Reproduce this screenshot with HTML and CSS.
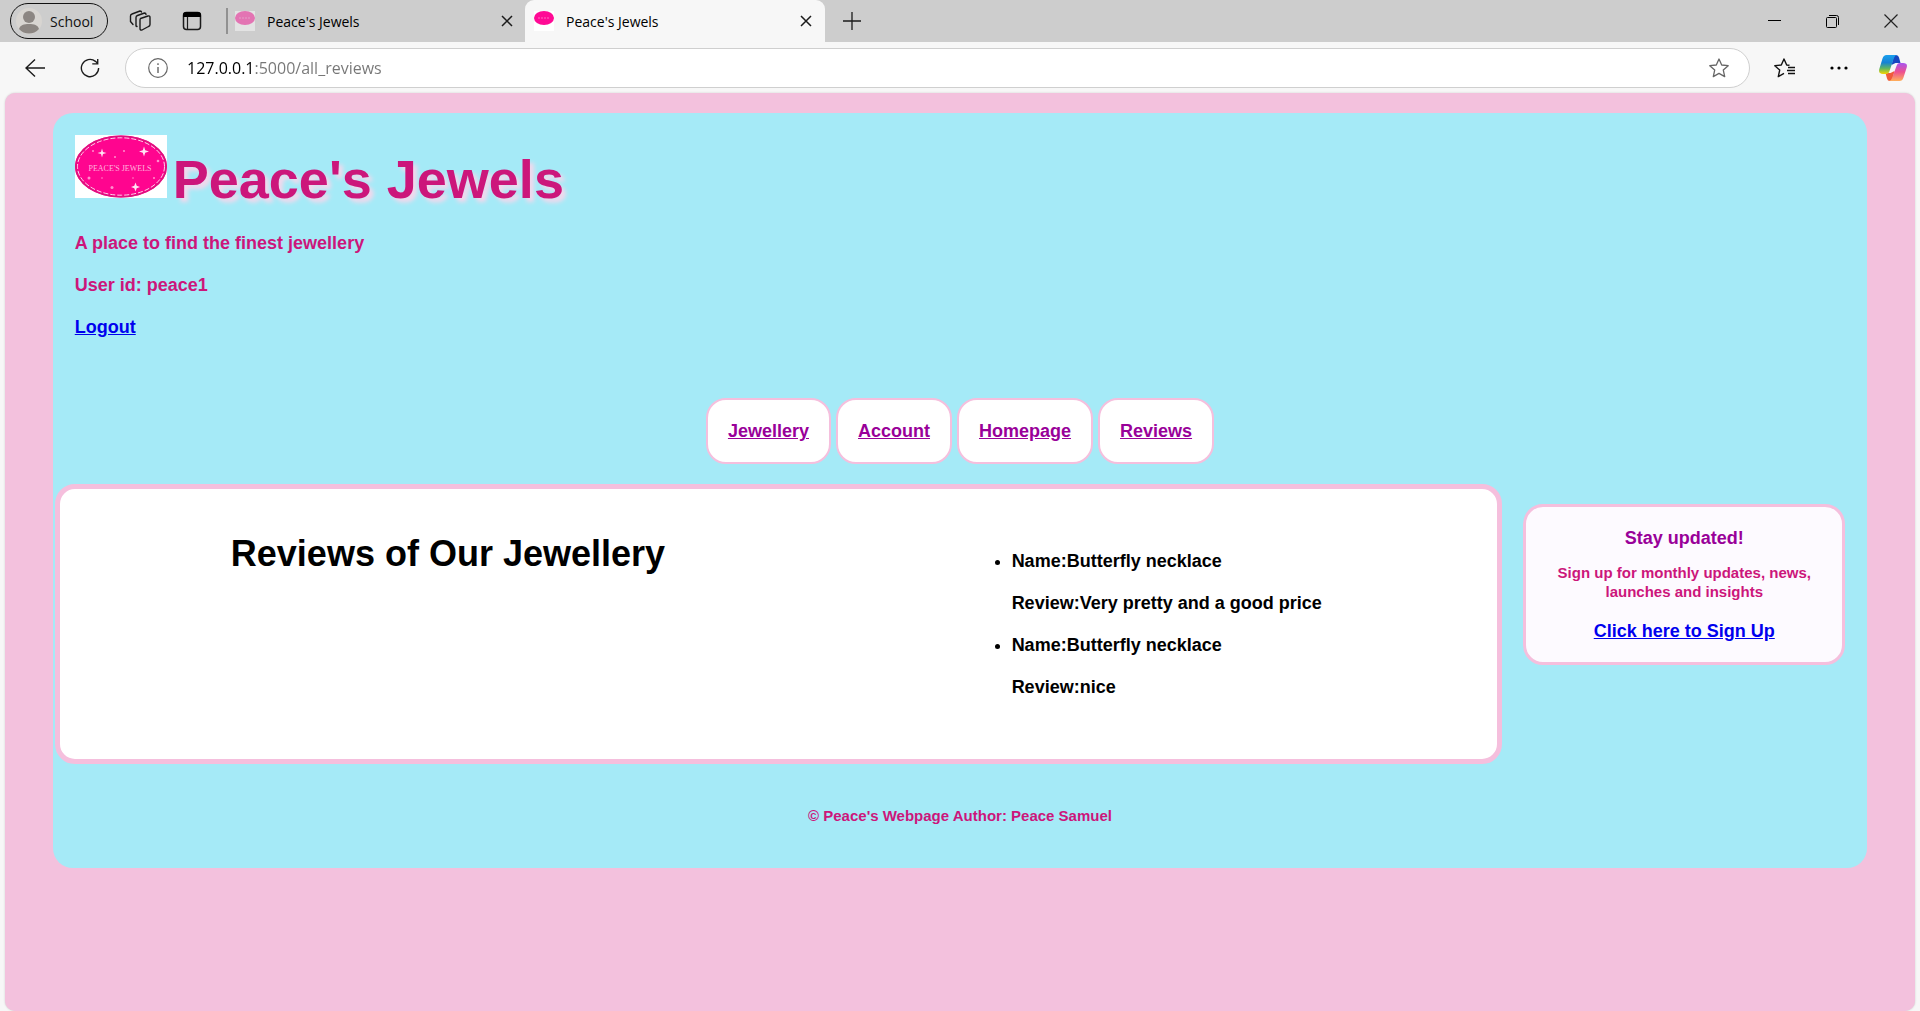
FILE: index.html
```html
<!DOCTYPE html>
<html lang="en">
<head>
<meta charset="utf-8">
<title>Peace's Jewels</title>
<link rel="stylesheet" href="styles.css">
</head>
<body>
<div class="tabbar">
  <button class="profile" type="button">
    <svg width="26" height="26" viewBox="0 0 26 26" aria-hidden="true"><circle cx="13" cy="13" r="13" fill="#d8d5d1"/><circle cx="13" cy="9" r="6" fill="#8c8682"/><path d="M3 21c1-4 5-5 10-5s9 1 10 5c-5 6-15 6-20 0z" fill="#8c8682"/></svg>
    <span>School</span>
  </button>
  <button class="icon-btn" type="button" aria-label="Workspaces">
    <svg width="22" height="22" viewBox="0 0 22 22" fill="none" stroke="#1b1b1b" stroke-width="1.4" stroke-linejoin="round" stroke-linecap="round"><path d="M11.500 8.500l7.500-2.500q2-.5 2 1.500v7q0 1.500-1.500 2l-6.500 3.500q-2 .5-2-1.500v-8q0-1.500 .5-2z"/><path d="M8 16.500l-1-.5V7.500q0-1.500 1.500-2L15.500 3q1.500 0 1.500 1.500M4 14.500l-2.500-3V6q0-1.500 1.500-2l8-3q1.500 0 1.500 1"/></svg>
  </button>
  <button class="icon-btn" type="button" aria-label="Tab actions">
    <svg width="20" height="20" viewBox="0 0 20 20"><rect x="1.500" y="1.500" width="17" height="17" rx="3" fill="none" stroke="#1b1b1b" stroke-width="1.500"/><path d="M1 6V4q0-3 3-3h12q3 0 3 3v2z" fill="#000"/><path d="M5.500 6v12" stroke="#1b1b1b" stroke-width="1.200"/></svg>
  </button>
  <span class="divider"></span>
  <div class="tab">
    <svg class="favicon faded" viewBox="0 0 20 20" aria-hidden="true"><path fill="#fff" d="M0 0h20v20H0z"/><ellipse cx="10" cy="7" rx="10" ry="7" fill="#ff0a95"/><path d="M4 7h12" stroke="#ff6cc0" stroke-dasharray="2 1"/></svg>
    <span class="tab-title">Peace's Jewels</span>
    <button class="close" type="button" aria-label="Close tab"><svg width="12" height="12" viewBox="0 0 12 12"><path d="M1 1l10 10M11 1L1 11" stroke="#1b1b1b" stroke-width="1.500"/></svg></button>
  </div>
  <div class="tab active">
    <svg class="favicon" viewBox="0 0 20 20" aria-hidden="true"><path fill="#fff" d="M0 0h20v20H0z"/><ellipse cx="10" cy="7" rx="10" ry="7" fill="#ff0a95"/><path d="M4 7h12" stroke="#ff6cc0" stroke-dasharray="2 1"/></svg>
    <span class="tab-title">Peace's Jewels</span>
    <button class="close" type="button" aria-label="Close tab"><svg width="12" height="12" viewBox="0 0 12 12"><path d="M1 1l10 10M11 1L1 11" stroke="#1b1b1b" stroke-width="1.500"/></svg></button>
  </div>
  <button class="new-tab" type="button" aria-label="New tab"><svg width="18" height="18" viewBox="0 0 18 18"><path d="M9 0v18M0 9h18" stroke="#1b1b1b" stroke-width="1.300"/></svg></button>
  <div class="window-controls">
    <button type="button" aria-label="Minimise"><svg width="14" height="14" viewBox="0 0 14 14"><path d="M0 6.500h13" stroke="#000"/></svg></button>
    <button type="button" aria-label="Restore"><svg width="14" height="14" viewBox="0 0 14 14" fill="none" stroke="#000"><rect x=".5" y="3.500" width="10" height="10" rx="1"/><path d="M3 1.500h7.500q2 0 2 2V11"/></svg></button>
    <button type="button" aria-label="Close window"><svg width="14" height="14" viewBox="0 0 14 14"><path d="M.5 .5l13 13M13.500 .5l-13 13" stroke="#222" stroke-width="1.200"/></svg></button>
  </div>
</div>
<div class="toolbar">
  <button class="nav-btn" type="button" aria-label="Back"><svg width="20" height="20" viewBox="0 0 20 20" fill="none" stroke="#1b1b1b" stroke-width="1.400"><path d="M20 10H1M10 1.500L1 10l9 8.500"/></svg></button>
  <button class="nav-btn" type="button" aria-label="Refresh"><svg width="20" height="20" viewBox="0 0 22 22" fill="none" stroke="#1b1b1b" stroke-width="1.500"><path d="M20.500 11a9.500 9.500 0 1 1-3.500-7.300L19 5.500M19.500 1v5.500H13.500"/></svg></button>
  <div class="address">
    <svg width="20" height="20" viewBox="0 0 20 20" fill="none" stroke="#666" stroke-width="1.200" aria-hidden="true"><circle cx="10" cy="10" r="9.300"/><path d="M10 9v6M10 5.300v1.700" stroke-width="1.400"/></svg>
    <input class="url" type="text" aria-label="Address" value="127.0.0.1:5000/all_reviews">
    <button class="star" type="button" aria-label="Add to favourites"><svg width="20" height="20" viewBox="0 0 20 20" fill="none" stroke="#666" stroke-width="1.300" stroke-linejoin="round"><path d="M10 1l2.700 6 6.500.7-4.900 4.400 1.400 6.500L10 15.400l-5.700 3.200 1.400-6.500L.8 7.700 7.300 7z"/></svg></button>
  </div>
  <button class="tool" type="button" aria-label="Favourites"><svg width="22" height="20" viewBox="0 0 22 20" fill="none" stroke="#111" stroke-width="1.400" stroke-linejoin="round"><path d="M15.500 7.300L12.700 7 10 1 7.300 7 .8 7.700l4.900 4.400-1.400 6.500L10 15.400M14 9.500h7M13 12.500h8M14 15.500h7"/></svg></button>
  <button class="tool" type="button" aria-label="Settings and more"><svg width="18" height="4" viewBox="0 0 18 4"><circle cx="2" cy="2" r="1.600"/><circle cx="9" cy="2" r="1.600"/><circle cx="16" cy="2" r="1.600"/></svg></button>
  <button class="tool" type="button" aria-label="Copilot"><svg width="28" height="26" viewBox="0 0 28 26">
    <defs>
      <linearGradient id="cool" x1="0" y1="0" x2="0" y2="1"><stop offset="0" stop-color="#1aa0ee"/><stop offset=".4" stop-color="#1682d4"/><stop offset=".7" stop-color="#5db563"/><stop offset="1" stop-color="#f6d500"/></linearGradient>
      <linearGradient id="warm" x1="0" y1="0" x2="0" y2="1"><stop offset="0" stop-color="#a855f0"/><stop offset=".5" stop-color="#ee5090"/><stop offset="1" stop-color="#ffb05a"/></linearGradient>
    </defs>
    <path d="M15 0h2q2.500 0 3 2.500l1.500 5.500h-5l-4 2z" fill="#1747c0"/>
    <path d="M13 26h-2q-2.500 0-3-2.500L6.500 18h5l4-2z" fill="#f05a3a"/>
    <path d="M7.500 0H18q-2 0-3 3l-4.500 13q-.8 3-3.500 3H4q-5 0-3.700-5L3.500 3.500Q4.500 0 7.500 0z" fill="url(#cool)"/>
    <path d="M20.500 26H10q2 0 3-3l4.500-12q.8-3 3.500-3h3q5 0 3.700 4.500l-3.200 10q-1 3.500-4 3.500z" fill="url(#warm)"/>
  </svg></button>
</div>
<div class="viewport">
  <div class="container">
    <header class="header">
      <h1 class="brand">
        <svg class="logo" viewBox="0 0 92 63" preserveAspectRatio="none" role="img" aria-label="Peace's Jewels logo">
          <path fill="#fff" d="M0 0h92v63H0z"/>
          <ellipse cx="46" cy="31.500" rx="46" ry="31" fill="#ff058f"/>
          <ellipse cx="46" cy="31.500" rx="45" ry="30" fill="none" stroke="#e0107f" stroke-width="2"/>
          <ellipse cx="46" cy="31.500" rx="43.500" ry="28.700" fill="none" stroke="#ffd3ec" stroke-dasharray="5 2"/>
          <path fill="#ffe3f3" d="M27 13.500l1 3.500 3.500 1-3.500 1-1 3.500-1-3.500-3.500-1 3.500-1zM69 11.500l1.200 3.800 3.800 1.200-3.800 1.200-1.200 3.800-1.200-3.800-3.800-1.200 3.800-1.200zM60.500 47.500l1.200 3.300 3.300 1.200-3.300 1.200-1.200 3.300-1.200-3.300-3.300-1.200 3.300-1.200z"/>
          <g fill="#ff8fce"><circle cx="18" cy="16" r="1"/><circle cx="49" cy="16" r="1"/><circle cx="40" cy="22" r="1"/><circle cx="83" cy="26" r="1.300"/><circle cx="14" cy="43" r="1.500"/><circle cx="37" cy="52.500" r="1.500"/><circle cx="27" cy="43" r=".8"/><circle cx="58" cy="43" r=".8"/><circle cx="79" cy="43" r="1"/></g>
          <text class="logo-text" x="45" y="36" text-anchor="middle">PEACE'S JEWELS</text>
        </svg>
        <span>Peace's Jewels</span>
      </h1>
      <p>A place to find the finest jewellery</p>
      <p>User id: peace1</p>
      <p><a href="#logout">Logout</a></p>
    </header>
    <nav class="menu">
      <a href="#jewellery">Jewellery</a>
      <a href="#account">Account</a>
      <a href="#homepage">Homepage</a>
      <a href="#reviews">Reviews</a>
    </nav>
    <div class="content">
      <main class="reviews" id="reviews">
        <h2>Reviews of Our Jewellery</h2>
        <ul>
          <li><p>Name:Butterfly necklace</p><p>Review:Very pretty and a good price</p></li>
          <li><p>Name:Butterfly necklace</p><p>Review:nice</p></li>
        </ul>
      </main>
      <aside class="signup">
        <h3>Stay updated!</h3>
        <p>Sign up for monthly updates, news, launches and insights</p>
        <a href="#signup">Click here to Sign Up</a>
      </aside>
    </div>
    <footer class="footer">© Peace's Webpage Author: Peace Samuel</footer>
  </div>
</div>
</body>
</html>
```
FILE: styles.css
```css
* { box-sizing: border-box; }

body {
  margin: 0;
  min-height: 100vh;
  display: flex;
  flex-direction: column;
  background: #f7f7f7;
  font-family: "Liberation Sans", Arial, sans-serif;
}

button {
  display: flex;
  align-items: center;
  justify-content: center;
  padding: 0;
  border: 0;
  background: none;
  color: #111;
}

h1, h2, h3, p, ul { margin: 0; padding: 0; }

/* Browser tab strip */
.tabbar {
  display: flex;
  align-items: center;
  height: 42px;
  padding-left: 10px;
  background: #cdcdcd;
  font-family: "Open Sans", "Noto Sans", sans-serif;
  font-size: 14px;
}
.profile {
  width: 98px;
  height: 36px;
  padding-left: 5px;
  justify-content: flex-start;
  gap: 8px;
  border: 1px solid #111;
  border-radius: 18px;
  font: inherit;
}
.icon-btn { width: 52px; height: 36px; margin-left: 6px; }
.icon-btn + .icon-btn { margin-left: 0; }
.divider { width: 2px; height: 26px; margin-left: 8px; background: #919191; }
.tab {
  display: flex;
  align-items: center;
  width: 297px;
  height: 42px;
  padding: 0 10px 0 7px;
}
.tab.active {
  width: 300px;
  padding: 0 11px 0 9px;
  border-radius: 9px 9px 0 0;
  background: #f7f7f7;
}
.favicon { width: 20px; height: 20px; }
.faded { opacity: .45; }
.tab-title { flex: 1; margin-left: 12px; }
.close { width: 16px; height: 20px; }
.new-tab { width: 54px; height: 36px; }
.window-controls { display: flex; margin-left: auto; }
.window-controls button { width: 58px; height: 42px; }

/* Browser toolbar */
.toolbar {
  display: flex;
  align-items: center;
  height: 51px;
  padding-left: 7px;
}
.nav-btn { width: 55px; height: 40px; }
.address {
  flex: 1;
  display: flex;
  align-items: center;
  height: 40px;
  margin: 0 8px;
  padding: 0 20px 0 22px;
  border: 1px solid #cfcfcf;
  border-radius: 20px;
  background: #fff;
}
.url {
  flex: 1;
  min-width: 0;
  margin-left: 19px;
  padding: 0;
  border: 0;
  background: linear-gradient(90deg, #000 67px, #767676 67px);
  -webkit-background-clip: text;
  background-clip: text;
  -webkit-text-fill-color: transparent;
  font-family: "Open Sans", "Noto Sans", sans-serif;
  font-size: 16px;
  line-height: 24px;
}
.tool { width: 54px; height: 40px; }

/* Page */
.viewport {
  flex: 1;
  margin: 0 5px;
  padding: 20px 0;
  border-radius: 10px;
  background: #f3c1dd;
  box-shadow: 0 0 2px #c8c8c8;
}
.container {
  width: 95%;
  margin: 0 auto;
  border-radius: 20px;
  background: #a5eaf7;
  color: #cc167b;
  font-size: 18px;
  font-weight: bold;
  line-height: 20px;
}
a { color: #0000ee; }
.header { padding: 22px 22px 0; }
.brand {
  display: flex;
  gap: 6px;
  font-size: 54px;
  line-height: 72px;
}
.brand span { padding-top: 8px; text-shadow: 4px 4px 4px #f5d8ec; }
.logo { width: 92px; height: 63px; }
.logo-text {
  font-family: "Liberation Serif", serif;
  font-size: 8px;
  font-weight: normal;
  fill: #ffb6de;
}
.header p { margin-top: 22px; }
.header .brand + p { margin-top: 18px; }
.menu {
  display: flex;
  justify-content: center;
  gap: 5px;
  margin-top: 61px;
}
.menu a {
  padding: 21px 20px;
  border: 2px solid #f5bfdd;
  border-radius: 20px;
  background: #fff;
  color: #990099;
}
.content {
  display: flex;
  align-items: flex-start;
  margin-top: 20px;
  padding: 0 22px 0 2px;
}
.reviews {
  flex: 1;
  display: grid;
  grid-template-columns: 5fr 4fr;
  padding: 42px 40px 62px 0;
  border: 5px solid #f5bfdd;
  border-radius: 20px;
  background: #fff;
  color: #000;
}
.reviews h2 {
  font-size: 36px;
  line-height: 46px;
  text-align: center;
}
.reviews ul {
  width: fit-content;
  margin: 20px auto 0;
  padding-left: 40px;
}
.reviews li p { margin-bottom: 22px; }
.reviews li:last-child p:last-child { margin-bottom: 0; }
.signup {
  width: 322px;
  margin: 20px 0 0 21px;
  padding: 21px 20px;
  border: 3px solid #f5bfdd;
  border-radius: 20px;
  background: #fdfaff;
  text-align: center;
}
.signup h3 { color: #990099; font-size: 18px; }
.signup p {
  margin: 15px 0 20px;
  font-size: 15px;
  line-height: 19px;
}
.footer {
  padding: 42px 20px;
  font-size: 15px;
  text-align: center;
}
```
